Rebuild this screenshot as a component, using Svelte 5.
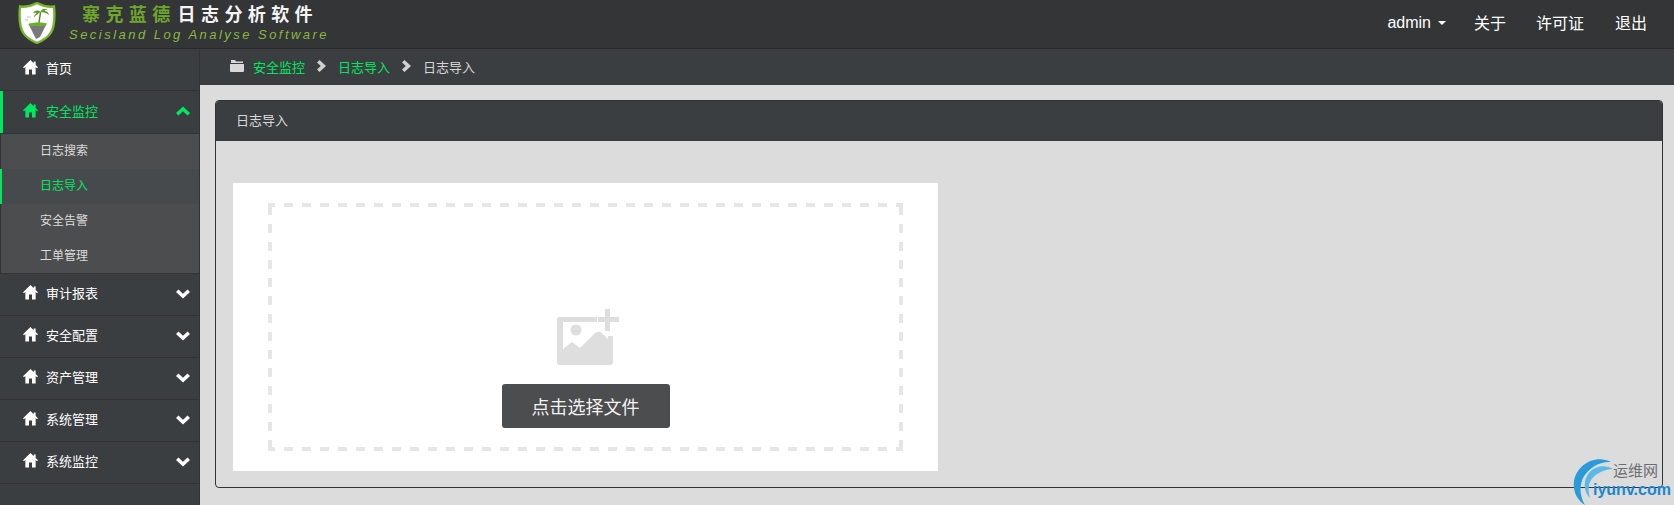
<script>
  const homePath = 'M7 0 0 6.800 .9 7.700 2.200 6.600V13.500H5.600V8.800H8.400V13.500H11.800V6.600L13.100 7.700 14 6.800 11.800 4.700V1.400H10V3z';
  const subItems = [
    { label: '日志搜索' },
    { label: '日志导入', active: true },
    { label: '安全告警' },
    { label: '工单管理' }
  ];
  const closedMenus = ['审计报表', '安全配置', '资产管理', '系统管理', '系统监控'];
</script>

<div class="page">
  <header class="topbar">
    <div class="brand">
      <svg class="shield" viewBox="0 0 38 42" width="38" height="42">
        <path d="M2 4.500C8 5.500 13 4 19 1c6 3 11 4.500 17 3.500 1 11 .5 20-3 26-3 5-8 8-14 10.500C13 38.500 8 35.500 5 30.500 1.500 24.500 1 15.500 2 4.500z" fill="#fff" stroke="#76b52c" stroke-width="2.400" />
        <path d="M11 23h17l-6 12-4 2z" fill="#77797b" />
        <path d="M10 22c5-2 14-2 19-.5l-1.500 2.500H12z" fill="#6fae2b" />
        <path d="M21 21c.3-4 1.300-8 1.500-11" stroke="#4f8a1f" stroke-width="1.400" fill="none" />
        <path d="M22.500 10c-3-2.500-6-1.500-7.500 1 2-.3 2.500-.5 3.500 0-1.500 1-2.500 3-2.500 4.500 2-2.500 4-4 6.500-5.500zM22.500 10c1-3 4-4 7-2.500-1.500.2-2.500.8-3 1.500 2 0 4 1.500 4.500 4-2.500-2-5.500-3-8.500-3z" fill="#5f9e23" />
        <path d="M9 15h4M7 18h3" stroke="#b9c9a8" stroke-width="1" />
      </svg>
      <div class="brand-text">
        <div class="brand-cn"><span class="green">寨克蓝德</span><span class="white">日志分析软件</span></div>
        <div class="brand-en">Secisland Log Analyse Software</div>
      </div>
    </div>
    <nav class="topnav">
      <span class="user">admin<i class="caret"></i></span>
      <span>关于</span>
      <span class="tight">许可证</span>
      <span>退出</span>
    </nav>
  </header>

  <div class="main">
    <aside class="sidebar">
      <div class="menu-row">
        <svg class="home" viewBox="0 0 14 14" width="15" height="15"><path d={homePath} /></svg>
        <span>首页</span>
      </div>
      <div class="menu-row open">
        <svg class="home" viewBox="0 0 14 14" width="15" height="15"><path d={homePath} /></svg>
        <span>安全监控</span>
        <svg class="chev" viewBox="0 0 14 10" width="14" height="10"><path d="M7 .5 14 7l-2.500 2.500L7 5.200 2.500 9.500 0 7z" /></svg>
      </div>
      <div class="submenu">
        {#each subItems as item}
          <div class="sub-row" class:active={item.active}>{item.label}</div>
        {/each}
      </div>
      {#each closedMenus as label}
        <div class="menu-row">
          <svg class="home" viewBox="0 0 14 14" width="15" height="15"><path d={homePath} /></svg>
          <span>{label}</span>
          <svg class="chev" viewBox="0 0 14 10" width="14" height="10"><path d="M7 9.500 0 3 2.500.5 7 4.800 11.500.5 14 3z" /></svg>
        </div>
      {/each}
    </aside>

    <main class="content">
      <div class="crumbs">
        <svg class="folder" viewBox="0 0 14 12" width="14" height="12"><path d="M1 0h4l1 1.500h7V3H1zM0 4h14v7a1 1 0 0 1-1 1H1a1 1 0 0 1-1-1z" /></svg>
        <span class="link">安全监控</span>
        <svg class="sep" viewBox="0 0 9 12" width="9" height="12"><path d="M2.500 0 9 6l-6.500 6L0 9.500 3.800 6 0 2.500z" /></svg>
        <span class="link">日志导入</span>
        <svg class="sep" viewBox="0 0 9 12" width="9" height="12"><path d="M2.500 0 9 6l-6.500 6L0 9.500 3.800 6 0 2.500z" /></svg>
        <span>日志导入</span>
      </div>

      <div class="area">
        <section class="panel">
          <div class="panel-head">日志导入</div>
          <div class="panel-body">
            <div class="upload">
              <div class="dropzone">
                <svg class="pic" viewBox="0 0 64 56" width="64" height="56">
                  <path d="M2 8h38v5H6v27l9-7 8 6 14-14c3-3 6-3 9 0l5 5V27h5v26a3 3 0 0 1-3 3H3a3 3 0 0 1-3-3V10a2 2 0 0 1 2-2z" fill="#dedede" />
                  <path d="M6 41 15 34l8 6 14-14c3-3 6-3 9 0l5 5v20H6z" fill="#dedede" />
                  <circle cx="19" cy="21" r="5.500" fill="#dedede" />
                  <path d="M48 0h5v8h9v5h-9v9h-5v-9h-7V8h7z" fill="#dedede" />
                </svg>
                <button class="pick" type="button">点击选择文件</button>
              </div>
            </div>
          </div>
        </section>
      </div>
    </main>
  </div>

  <div class="watermark">
    <svg viewBox="0 0 50 50" width="50" height="50">
      <path d="M40 5C25-3 6 7 3 24c-1.500 10 3 19 11 24C9 40 8 30 12 21 17 11 29 4 40 5z" fill="#2a9ad8" />
      <path d="M42 12C30 5 16 12 14 25c-1 6 1 12 5 16-2-7-2-13 1-18 5-7 14-11 22-11z" fill="#5cb8e6" />
    </svg>
    <span class="wm-cn">运维网</span>
    <span class="wm-en">iyunv.com</span>
  </div>
</div>

<style>
  :global(body) {
    margin: 0;
    background: #dcdcdc;
  }

  .page {
    position: relative;
    width: 1674px;
    height: 505px;
    overflow: hidden;
    display: flex;
    flex-direction: column;
    font-family: "Noto Sans CJK SC", "Liberation Sans", sans-serif;
    font-size: 13px;
    color: #fff;
    background: #dcdcdc;
  }

  .topbar {
    height: 48px;
    flex: none;
    display: flex;
    align-items: flex-start;
    justify-content: space-between;
    background: #333537;
    border-bottom: 1px solid #2a2a2a;
  }

  .brand {
    display: flex;
    padding-left: 18px;
  }

  .shield {
    margin-top: 2px;
  }

  .brand-text {
    margin-left: 13px;
  }

  .brand-cn {
    height: 27px;
    padding-left: 13px;
    font-size: 18px;
    line-height: 26px;
    font-weight: 700;
    letter-spacing: 5.400px;
    white-space: nowrap;
  }

  .green {
    color: #6fa72c;
    margin-right: 2px;
  }

  .white {
    color: #f4f4f4;
  }

  .brand-en {
    font-family: "Liberation Sans", sans-serif;
    font-style: italic;
    font-size: 13px;
    line-height: 15px;
    letter-spacing: 2.470px;
    color: #88b83f;
    white-space: nowrap;
  }

  .topnav {
    display: flex;
    align-items: center;
    height: 44px;
    gap: 31px;
    padding-right: 27px;
    font-size: 16px;
  }

  .tight {
    margin-left: -1px;
  }

  .user {
    font-family: "Liberation Sans", sans-serif;
    display: flex;
    align-items: center;
    margin-top: 2px;
    margin-right: -3px;
  }

  .caret {
    width: 0;
    height: 0;
    margin-left: 7px;
    border-top: 4px solid #fff;
    border-left: 4px solid transparent;
    border-right: 4px solid transparent;
  }

  .main {
    flex: 1;
    display: flex;
    min-height: 0;
  }

  .sidebar {
    width: 200px;
    flex: none;
    box-sizing: border-box;
    background: #3b3e41;
    border-right: 1px solid #333;
  }

  .menu-row {
    height: 42px;
    box-sizing: border-box;
    display: flex;
    align-items: center;
    padding: 0 10px 4px 23px;
    border-bottom: 1px solid #323232;
  }

  .menu-row span {
    margin-left: 8px;
    flex: 1;
  }

  .home {
    fill: #fff;
    flex: none;
  }

  .chev {
    fill: #fff;
    flex: none;
    margin-top: 2px;
    margin-right: -1px;
  }

  .menu-row.open {
    color: #00e85f;
    padding-left: 20px;
    border-left: 3px solid #00e85f;
    border-bottom: none;
  }

  .menu-row.open .home,
  .menu-row.open .chev {
    fill: #00e85f;
  }

  .submenu {
    box-sizing: border-box;
    height: 141px;
    background: #4c4d4f;
    border: 1px solid #333;
    border-right: none;
  }

  .sub-row {
    height: 35px;
    box-sizing: border-box;
    display: flex;
    align-items: center;
    padding: 0 0 4px 39px;
    font-size: 12px;
    color: #dcdcdc;
  }

  .sub-row.active {
    color: #00e85f;
    background: #464a4c;
    margin-left: -1px;
    padding-left: 38px;
    border-left: 2px solid #00e85f;
  }

  .content {
    flex: 1;
    min-width: 0;
    display: flex;
    flex-direction: column;
  }

  .crumbs {
    height: 36px;
    flex: none;
    display: flex;
    align-items: center;
    padding-left: 30px;
    padding-bottom: 2px;
    box-sizing: border-box;
    background: #3b3e41;
    color: #d4d4d4;
  }

  .folder {
    fill: #d8d8d8;
    margin-right: 9px;
  }

  .link {
    color: #00e85f;
  }

  .sep {
    fill: #d0d0d0;
    margin: 0 12px;
  }

  .area {
    flex: 1;
    padding: 15px 11px 17px 15px;
    min-height: 0;
    display: flex;
  }

  .panel {
    flex: 1;
    display: flex;
    flex-direction: column;
    border: 1px solid #333;
    border-radius: 4px;
    background: #dcdcdc;
    overflow: hidden;
  }

  .panel-head {
    height: 40px;
    box-sizing: border-box;
    flex: none;
    display: flex;
    align-items: center;
    padding: 0 0 4px 20px;
    background: #3b3e41;
    color: #d8d8d8;
  }

  .panel-body {
    flex: 1;
    padding: 42px 0 16px 17px;
    min-height: 0;
    display: flex;
  }

  .upload {
    width: 705px;
    box-sizing: border-box;
    padding: 20px 35px;
    background: #fff;
    display: flex;
  }

  /* dashes have an 18px period, drawn by hand because a dashed border spaces them tighter */
  .dropzone {
    flex: 1;
    box-sizing: border-box;
    display: flex;
    flex-direction: column;
    align-items: center;
    justify-content: flex-end;
    padding-bottom: 23px;
    background-image:
      linear-gradient(90deg, #e6e6e6 50%, transparent 50%),
      linear-gradient(90deg, #e6e6e6 50%, transparent 50%),
      linear-gradient(180deg, #e6e6e6 50%, transparent 50%),
      linear-gradient(180deg, #e6e6e6 50%, transparent 50%);
    background-size: 18px 4px, 18px 4px, 4px 18px, 4px 18px;
    background-position: -2px 0, -2px 100%, 0 3px, 100% 3px;
    background-repeat: repeat-x, repeat-x, repeat-y, repeat-y;
  }

  .pic {
    margin-left: 7px;
    margin-bottom: 19px;
  }

  .pick {
    width: 168px;
    height: 44px;
    padding: 0;
    border: none;
    border-radius: 3px;
    background: #4c4d4e;
    color: #f2f2f2;
    font: 18px "Noto Sans CJK SC", "Liberation Sans", sans-serif;
  }

  /* site stamp that sits over the panel corner */
  .watermark {
    position: absolute;
    left: 1540px;
    top: 455px;
    width: 134px;
    height: 50px;
  }

  .watermark svg {
    position: absolute;
    left: 31px;
    top: 2px;
  }

  .wm-cn {
    position: absolute;
    left: 73px;
    top: 4px;
    font-size: 15px;
    line-height: 22px;
    color: #6c6f72;
  }

  .wm-en {
    position: absolute;
    left: 53px;
    top: 26px;
    font-family: "Liberation Sans", sans-serif;
    font-weight: 700;
    font-size: 16px;
    line-height: 18px;
    color: #1c87cf;
  }
</style>
